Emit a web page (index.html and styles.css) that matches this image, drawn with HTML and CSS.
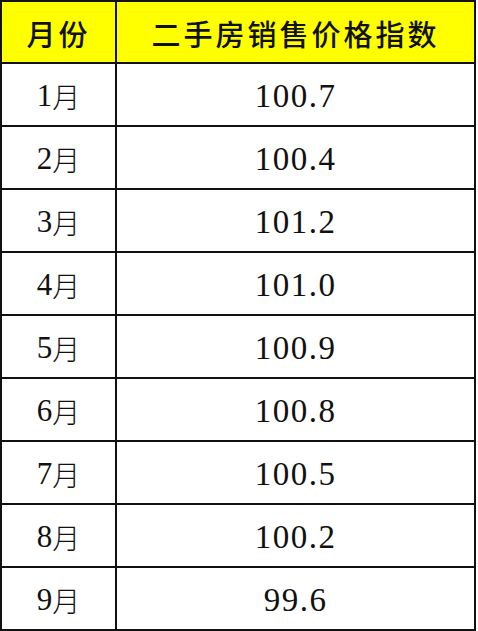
FILE: index.html
```html
<!DOCTYPE html>
<html lang="zh-CN">
<head>
<meta charset="utf-8">
<title>二手房销售价格指数</title>
<link rel="stylesheet" href="styles.css">
</head>
<body>
<div class="table">
  <div class="cell head">月份</div>
  <div class="cell head wide">二手房销售价格指数</div>
  <div class="cell month">1<span class="cjk">月</span></div><div class="cell num">100.7</div>
  <div class="cell month">2<span class="cjk">月</span></div><div class="cell num">100.4</div>
  <div class="cell month">3<span class="cjk">月</span></div><div class="cell num">101.2</div>
  <div class="cell month">4<span class="cjk">月</span></div><div class="cell num">101.0</div>
  <div class="cell month">5<span class="cjk">月</span></div><div class="cell num">100.9</div>
  <div class="cell month">6<span class="cjk">月</span></div><div class="cell num">100.8</div>
  <div class="cell month">7<span class="cjk">月</span></div><div class="cell num">100.5</div>
  <div class="cell month">8<span class="cjk">月</span></div><div class="cell num">100.2</div>
  <div class="cell month">9<span class="cjk">月</span></div><div class="cell num">99.6</div>
</div>
</body>
</html>
```
FILE: styles.css
```css
html, body {
  margin: 0;
  padding: 0;
  background: #ffffff;
}
.table {
  display: grid;
  grid-template-columns: 115px 359px;
  grid-template-rows: 62px repeat(9, 63px);
  width: 476px;
  border-top: 2px solid #111;
  border-left: 2px solid #111;
  box-sizing: border-box;
}
.cell {
  display: flex;
  align-items: center;
  justify-content: center;
  border-right: 2px solid #111;
  border-bottom: 2px solid #111;
  color: #111;
  background: #fff;
}
.head {
  background: #ffff00;
  font-family: "Noto Sans CJK SC", sans-serif;
  font-weight: 500;
  font-size: 29px;
  letter-spacing: 3px;
  padding-top: 2px;
}
.month {
  font-family: "Liberation Serif", "Times New Roman", "DejaVu Serif", serif;
  font-size: 31px;
  padding-top: 2px;
}
.cjk {
  font-family: "Noto Sans CJK SC", sans-serif;
  font-weight: 300;
  font-size: 28px;
}
.num {
  font-family: "Liberation Serif", "Times New Roman", "DejaVu Serif", serif;
  font-size: 33px;
  letter-spacing: 1.5px;
  padding-top: 4px;
}
```
